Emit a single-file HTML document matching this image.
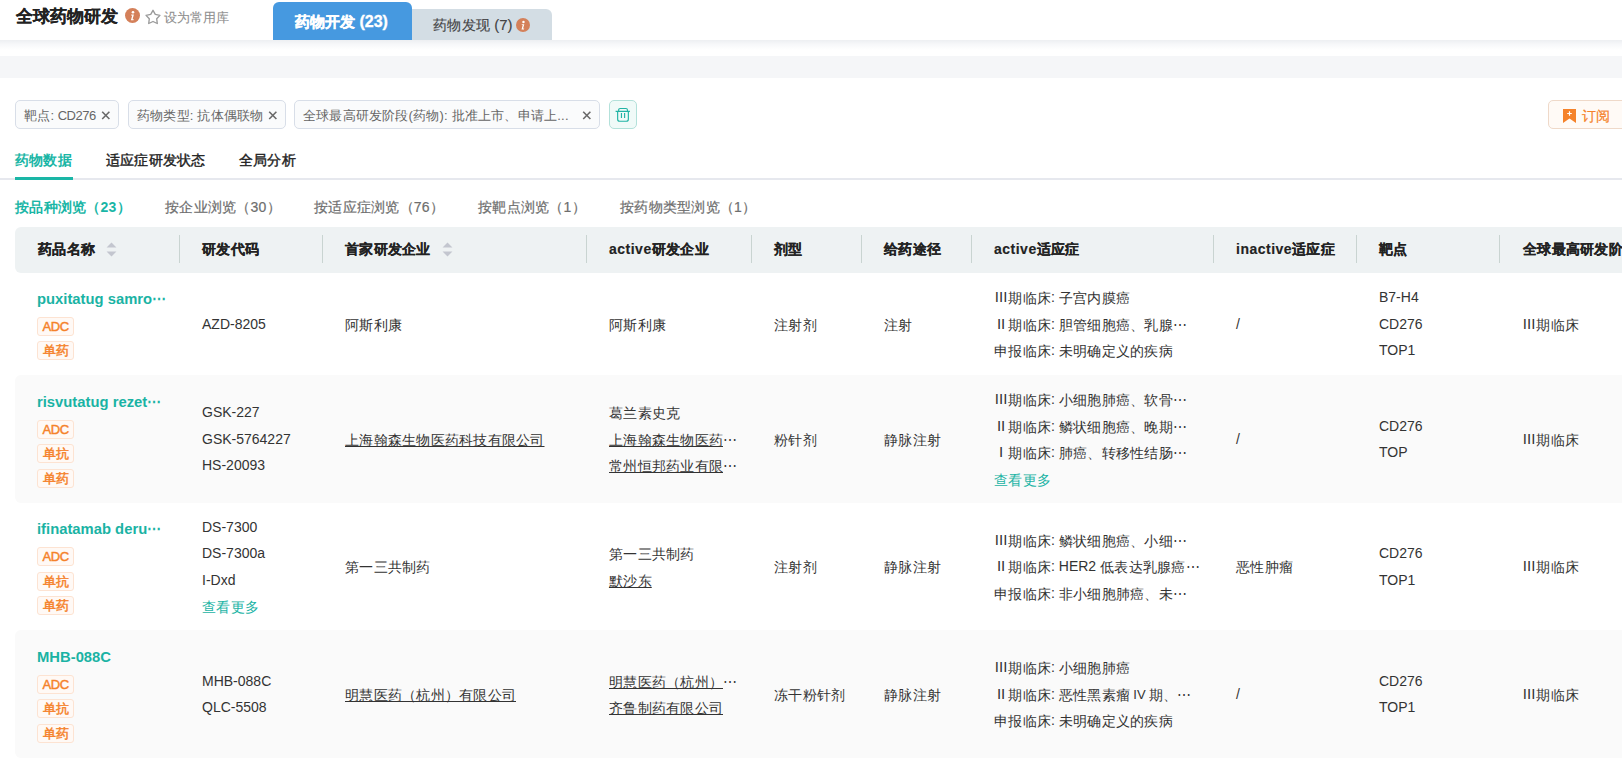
<!DOCTYPE html>
<html><head><meta charset="utf-8">
<style>
*{box-sizing:border-box;margin:0;padding:0}
html,body{width:1622px;height:759px;overflow:hidden;background:#fff}
body{position:relative;font-family:"Liberation Sans",sans-serif;font-size:14px;color:#333}
.abs{position:absolute;white-space:nowrap}
.hdr{position:absolute;left:0;top:0;width:1622px;height:40px;background:#fff}
.shadow{position:absolute;left:0;top:40px;width:1622px;height:10px;background:linear-gradient(#edeff2,#f7f8fa 45%,rgba(255,255,255,0))}
.band{position:absolute;left:0;top:56px;width:1622px;height:22px;background:#f5f6f8}
.title{left:15.5px;top:5px;font-size:17px;font-weight:bold;color:#222;line-height:24px;-webkit-text-stroke:0.15px #222}
.info{position:absolute;width:15px;height:15px;border-radius:50%;background:#d4805a}
.info svg{position:absolute;left:0;top:0}
.fav{left:164px;top:8px;font-size:13px;color:#8f8f8f;line-height:20px;-webkit-text-stroke:0.1px #8f8f8f}
.tab1{left:273px;top:2px;width:139px;height:38px;background:#4699e0;border-radius:6px 6px 0 0;color:#fff;font-weight:bold;font-size:15px;line-height:40px;text-align:left;padding-left:21.5px;letter-spacing:0.15px;-webkit-text-stroke:0.35px #fff}
.tab2{left:412px;top:9px;width:140px;height:31px;background:#d3dde4;border-radius:0 6px 0 0;color:#444;font-size:14px;line-height:31px}
.chip{position:absolute;top:100px;height:29px;border:1px solid #d8dee8;border-radius:5px;background:#fafbfc;color:#666;font-size:13px;line-height:29.5px;padding-left:8px;white-space:nowrap;letter-spacing:0.2px}
.chip .x{position:absolute;top:0;width:9px;height:27px}
.trash{position:absolute;left:609px;top:100px;width:28px;height:29px;border:1px solid #b3e1da;border-radius:5px;background:#f0faf8}
.sub{position:absolute;left:1548px;top:100px;width:90px;height:29px;border:1px solid #efd9c9;border-radius:5px;background:#fffaf6;color:#f5822a;font-size:14px;line-height:31px}
.mtab{top:150px;font-size:14px;line-height:20px;color:#222;letter-spacing:0.2px;-webkit-text-stroke:0.4px #222}
.mline{position:absolute;left:0;top:178px;width:1622px;height:2px;background:#e6e8ee}
.mbar{position:absolute;left:15px;top:177px;width:58px;height:3px;background:#1ab6a6}
.stab{top:196.5px;font-size:14px;line-height:20px;color:#6e6e6e;letter-spacing:0.25px;-webkit-text-stroke:0.2px #6e6e6e}
.thead{position:absolute;left:15px;top:227px;width:1620px;height:46px;background:#eef2f3;border-radius:6px 0 0 6px}
.th{position:absolute;top:0;height:44px;line-height:44px;font-weight:bold;color:#222;font-size:14px;letter-spacing:0.3px;-webkit-text-stroke:0.15px #222;white-space:nowrap}
.dv{position:absolute;top:8px;width:1px;height:28px;background:#c9d4d1}
.row{position:absolute;left:15px;width:1620px}
.row.g{background:#fafafa;border-radius:6px 0 0 6px}
.cell{position:absolute;top:0;bottom:0;display:flex;flex-direction:column;justify-content:center;white-space:nowrap;font-size:14px;letter-spacing:0.25px}
.l{letter-spacing:0}
.c{position:relative;top:1px}
.th .c,.tag .c,.nm .c{top:0}
.th .l{letter-spacing:0.5px}
.ln{height:26.5px;line-height:26.5px}
.nm{color:#1ab3a4;font-weight:bold;line-height:22px;height:22px;font-size:14.8px}
.tag{display:inline-block;width:37px;text-align:center;height:19px;line-height:17.5px;border:1px solid #fde3d2;background:#fff9f5;letter-spacing:0;color:#f5822a;font-size:13px;padding:0;border-radius:3px;margin-top:5.5px;align-self:flex-start;-webkit-text-stroke:0.45px #f5822a}
.tag.f{margin-top:7px}
.adc{font-weight:normal}
.adc .l{letter-spacing:-0.4px}
.lk{color:#1ab3a4}
.u{text-decoration:underline;text-underline-offset:1px}
.dots{font-size:14px}
.rn{display:inline-block;width:14.25px;text-align:center;font-size:15px;letter-spacing:0}
.rn.r4{font-size:13px;letter-spacing:-0.2px}
.sp{display:inline-block;width:2.3px}
.sort{position:absolute;right:-22px;top:15px}
</style></head><body>
<div class="hdr"></div>
<div class="shadow"></div>
<div class="band"></div>

<div class="abs title">全球药物研发</div>
<div class="info" style="left:125px;top:8px"><svg width="15" height="15" viewBox="0 0 15 15"><circle cx="8" cy="4.2" r="1.3" fill="#fff"/><path d="M6.3 6.6h2.6l-1.3 4.6h1.2l-.3 1h-2.6l1.3-4.6h-1.2z" fill="#fff"/></svg></div>
<svg class="abs" style="left:144.5px;top:8.5px" width="16" height="16" viewBox="0 0 16 16"><path d="M8.00 1.30L10.29 5.44L14.94 6.34L11.71 9.81L12.29 14.51L8.00 12.50L3.71 14.51L4.29 9.81L1.06 6.34L5.71 5.44z" fill="none" stroke="#9a9a9a" stroke-width="1.35" stroke-linejoin="round"/></svg>
<div class="abs fav">设为常用库</div>

<div class="abs tab1">药物开发 <span style="font-size:16px;letter-spacing:0">(23)</span></div>
<div class="abs tab2"><span style="position:absolute;left:21px;top:0;letter-spacing:0.25px;-webkit-text-stroke:0.15px #444">药物发现 <span style="font-size:15px;letter-spacing:0">(7)</span></span><div class="info" style="left:104px;top:9px;width:14px;height:14px"><svg width="14" height="14" viewBox="0 0 15 15"><circle cx="8" cy="4.2" r="1.3" fill="#fff"/><path d="M6.3 6.6h2.6l-1.3 4.6h1.2l-.3 1h-2.6l1.3-4.6h-1.2z" fill="#fff"/></svg></div></div>

<!-- chips -->
<div class="chip" style="left:15px;width:104px">靶点<span style="letter-spacing:0">: </span><span style="letter-spacing:-0.5px">CD276</span><svg class="x" style="right:8px" viewBox="0 0 9 27"><path d="M1.2 10.8l7.2 7.2M8.4 10.8L1.2 18" stroke="#6a6a6a" stroke-width="1.6"/></svg></div>
<div class="chip" style="left:128px;width:158px">药物类型: 抗体偶联物<svg class="x" style="right:8px" viewBox="0 0 9 27"><path d="M1.2 10.8l7.2 7.2M8.4 10.8L1.2 18" stroke="#6a6a6a" stroke-width="1.6"/></svg></div>
<div class="chip" style="left:294px;width:306px">全球最高研发阶段(药物): 批准上市、申请上...<svg class="x" style="right:8px" viewBox="0 0 9 27"><path d="M1.2 10.8l7.2 7.2M8.4 10.8L1.2 18" stroke="#6a6a6a" stroke-width="1.6"/></svg></div>
<div class="trash"><svg style="position:absolute;left:5px;top:6px" width="16" height="16" viewBox="0 0 16 16"><path d="M0.6 4.4H14.9M3.65 4.4V3Q3.65 1.5 5.15 1.5H10.95Q12.45 1.5 12.45 3V4.4M2.65 4.4V12.25Q2.65 14.25 4.65 14.25H11.35Q13.35 14.25 13.35 12.25V4.4M6.45 5.9V11.1M9.6 5.9V11.1" fill="none" stroke="#22b4a5" stroke-width="1.15"/></svg></div>
<div class="sub"><svg style="position:absolute;left:14px;top:8px" width="13" height="14" viewBox="0 0 13 14"><path d="M0 0h13v14L6.5 9.6 0 14z" fill="#f5822a"/><path d="M6.5 2.2v4.6M4.2 4.5h4.6" stroke="#fff" stroke-width="1.2"/></svg><span style="position:absolute;left:32.5px;top:-0.5px;-webkit-text-stroke:0.2px #f5822a">订阅</span></div>

<!-- main tabs -->
<div class="mline"></div>
<div class="mbar"></div>
<div class="abs mtab" style="left:15px;color:#1ab6a6;font-weight:bold;-webkit-text-stroke:0">药物数据</div>
<div class="abs mtab" style="left:106px">适应症研发状态</div>
<div class="abs mtab" style="left:239px">全局分析</div>

<!-- sub tabs -->
<div class="abs stab" style="left:15px;color:#1ab6a6;font-weight:bold;-webkit-text-stroke:0">按品种浏览（23）</div>
<div class="abs stab" style="left:165px">按企业浏览（30）</div>
<div class="abs stab" style="left:314px">按适应症浏览（76）</div>
<div class="abs stab" style="left:478px">按靶点浏览（1）</div>
<div class="abs stab" style="left:620px">按药物类型浏览（1）</div>

<!-- TABLE -->
<div class="thead">
<div class="th" style="left:23px"><span class="c">药品名称</span><svg class="sort" width="11" height="15" viewBox="0 0 10 15" preserveAspectRatio="none"><path d="M5 0.5L9.5 5.5H0.5z" fill="#c3c6cf"/><path d="M5 14.5L9.5 9.5H0.5z" fill="#c3c6cf"/></svg></div>
<div class="th" style="left:187px"><span class="c">研发代码</span></div>
<div class="dv" style="left:164px"></div>
<div class="th" style="left:330px"><span class="c">首家研发企业</span><svg class="sort" width="11" height="15" viewBox="0 0 10 15" preserveAspectRatio="none"><path d="M5 0.5L9.5 5.5H0.5z" fill="#c3c6cf"/><path d="M5 14.5L9.5 9.5H0.5z" fill="#c3c6cf"/></svg></div>
<div class="dv" style="left:307px"></div>
<div class="th" style="left:594px"><span class="l">active</span><span class="c">研发企业</span></div>
<div class="dv" style="left:571px"></div>
<div class="th" style="left:759px"><span class="c">剂型</span></div>
<div class="dv" style="left:736px"></div>
<div class="th" style="left:869px"><span class="c">给药途径</span></div>
<div class="dv" style="left:846px"></div>
<div class="th" style="left:979px"><span class="l">active</span><span class="c">适应症</span></div>
<div class="dv" style="left:956px"></div>
<div class="th" style="left:1221px"><span class="l">inactive</span><span class="c">适应症</span></div>
<div class="dv" style="left:1198px"></div>
<div class="th" style="left:1364px"><span class="c">靶点</span></div>
<div class="dv" style="left:1341px"></div>
<div class="th" style="left:1508px"><span class="c">全球最高研发阶段</span></div>
<div class="dv" style="left:1484px"></div>
</div>
<div class="row" style="top:273px;height:102px">
<div class="cell" style="left:22px"><div class="nm"><span class="l">puxitatug samro</span><span class="dots"><span class="c">⋯</span></span></div><div class="tag f"><b class="adc"><span class="l">ADC</span></b></div><div class="tag"><span class="c">单药</span></div></div>
<div class="cell" style="left:187px"><div class="ln"><span class="l">AZD-8205</span></div></div>
<div class="cell" style="left:330px"><div class="ln"><span class="c">阿斯利康</span></div></div>
<div class="cell" style="left:594px"><div class="ln"><span class="c">阿斯利康</span></div></div>
<div class="cell" style="left:759px"><div class="ln"><span class="c">注射剂</span></div></div>
<div class="cell" style="left:869px"><div class="ln"><span class="c">注射</span></div></div>
<div class="cell" style="left:979px"><div class="ln"><span class="rn"><span class="l">III</span></span><span class="c">期临床</span><span class="l">: </span><span class="c">子宫内膜癌</span></div><div class="ln"><span class="rn"><span class="l">II</span></span><span class="c">期临床</span><span class="l">: </span><span class="c">胆管细胞癌、乳腺</span><span class="dots"><span class="c">⋯</span></span></div><div class="ln"><span class="c">申报临床</span><span class="l">: </span><span class="c">未明确定义的疾病</span></div></div>
<div class="cell" style="left:1221px"><div class="ln"><span class="l">/</span></div></div>
<div class="cell" style="left:1364px"><div class="ln"><span class="l">B7-H4</span></div><div class="ln"><span class="l">CD276</span></div><div class="ln"><span class="l">TOP1</span></div></div>
<div class="cell" style="left:1507px"><div class="ln"><span class="rn"><span class="l">III</span></span><span class="c">期临床</span></div></div>
</div>
<div class="row g" style="top:375px;height:128px">
<div class="cell" style="left:22px"><div class="nm"><span class="l">risvutatug rezet</span><span class="dots"><span class="c">⋯</span></span></div><div class="tag f"><b class="adc"><span class="l">ADC</span></b></div><div class="tag"><span class="c">单抗</span></div><div class="tag"><span class="c">单药</span></div></div>
<div class="cell" style="left:187px"><div class="ln"><span class="l">GSK-227</span></div><div class="ln"><span class="l">GSK-5764227</span></div><div class="ln"><span class="l">HS-20093</span></div></div>
<div class="cell" style="left:330px"><div class="ln"><span class="u"><span class="c">上海翰森生物医药科技有限公司</span></span></div></div>
<div class="cell" style="left:594px"><div class="ln"><span class="c">葛兰素史克</span></div><div class="ln"><span class="u"><span class="c">上海翰森生物医药</span></span><span class="dots"><span class="c">⋯</span></span></div><div class="ln"><span class="u"><span class="c">常州恒邦药业有限</span></span><span class="dots"><span class="c">⋯</span></span></div></div>
<div class="cell" style="left:759px"><div class="ln"><span class="c">粉针剂</span></div></div>
<div class="cell" style="left:869px"><div class="ln"><span class="c">静脉注射</span></div></div>
<div class="cell" style="left:979px"><div class="ln"><span class="rn"><span class="l">III</span></span><span class="c">期临床</span><span class="l">: </span><span class="c">小细胞肺癌、软骨</span><span class="dots"><span class="c">⋯</span></span></div><div class="ln"><span class="rn"><span class="l">II</span></span><span class="c">期临床</span><span class="l">: </span><span class="c">鳞状细胞癌、晚期</span><span class="dots"><span class="c">⋯</span></span></div><div class="ln"><span class="rn"><span class="l">I</span></span><span class="c">期临床</span><span class="l">: </span><span class="c">肺癌、转移性结肠</span><span class="dots"><span class="c">⋯</span></span></div><div class="ln"><span class="lk"><span class="c">查看更多</span></span></div></div>
<div class="cell" style="left:1221px"><div class="ln"><span class="l">/</span></div></div>
<div class="cell" style="left:1364px"><div class="ln"><span class="l">CD276</span></div><div class="ln"><span class="l">TOP</span></div></div>
<div class="cell" style="left:1507px"><div class="ln"><span class="rn"><span class="l">III</span></span><span class="c">期临床</span></div></div>
</div>
<div class="row" style="top:503px;height:127px">
<div class="cell" style="left:22px"><div class="nm"><span class="l">ifinatamab deru</span><span class="dots"><span class="c">⋯</span></span></div><div class="tag f"><b class="adc"><span class="l">ADC</span></b></div><div class="tag"><span class="c">单抗</span></div><div class="tag"><span class="c">单药</span></div></div>
<div class="cell" style="left:187px"><div class="ln"><span class="l">DS-7300</span></div><div class="ln"><span class="l">DS-7300a</span></div><div class="ln"><span class="l">I-Dxd</span></div><div class="ln"><span class="lk"><span class="c">查看更多</span></span></div></div>
<div class="cell" style="left:330px"><div class="ln"><span class="c">第一三共制药</span></div></div>
<div class="cell" style="left:594px"><div class="ln"><span class="c">第一三共制药</span></div><div class="ln"><span class="u"><span class="c">默沙东</span></span></div></div>
<div class="cell" style="left:759px"><div class="ln"><span class="c">注射剂</span></div></div>
<div class="cell" style="left:869px"><div class="ln"><span class="c">静脉注射</span></div></div>
<div class="cell" style="left:979px"><div class="ln"><span class="rn"><span class="l">III</span></span><span class="c">期临床</span><span class="l">: </span><span class="c">鳞状细胞癌、小细</span><span class="dots"><span class="c">⋯</span></span></div><div class="ln"><span class="rn"><span class="l">II</span></span><span class="c">期临床</span><span class="l">: HER2 </span><span class="c">低表达乳腺癌</span><span class="dots"><span class="c">⋯</span></span></div><div class="ln"><span class="c">申报临床</span><span class="l">: </span><span class="c">非小细胞肺癌、未</span><span class="dots"><span class="c">⋯</span></span></div></div>
<div class="cell" style="left:1221px"><div class="ln"><span class="c">恶性肿瘤</span></div></div>
<div class="cell" style="left:1364px"><div class="ln"><span class="l">CD276</span></div><div class="ln"><span class="l">TOP1</span></div></div>
<div class="cell" style="left:1507px"><div class="ln"><span class="rn"><span class="l">III</span></span><span class="c">期临床</span></div></div>
</div>
<div class="row g" style="top:630px;height:128px">
<div class="cell" style="left:22px"><div class="nm"><span class="l">MHB-088C</span></div><div class="tag f"><b class="adc"><span class="l">ADC</span></b></div><div class="tag"><span class="c">单抗</span></div><div class="tag"><span class="c">单药</span></div></div>
<div class="cell" style="left:187px"><div class="ln"><span class="l">MHB-088C</span></div><div class="ln"><span class="l">QLC-5508</span></div></div>
<div class="cell" style="left:330px"><div class="ln"><span class="u"><span class="c">明慧医药（杭州）有限公司</span></span></div></div>
<div class="cell" style="left:594px"><div class="ln"><span class="u"><span class="c">明慧医药（杭州）</span></span><span class="dots"><span class="c">⋯</span></span></div><div class="ln"><span class="u"><span class="c">齐鲁制药有限公司</span></span></div></div>
<div class="cell" style="left:759px"><div class="ln"><span class="c">冻干粉针剂</span></div></div>
<div class="cell" style="left:869px"><div class="ln"><span class="c">静脉注射</span></div></div>
<div class="cell" style="left:979px"><div class="ln"><span class="rn"><span class="l">III</span></span><span class="c">期临床</span><span class="l">: </span><span class="c">小细胞肺癌</span></div><div class="ln"><span class="rn"><span class="l">II</span></span><span class="c">期临床</span><span class="l">: </span><span class="c">恶性黑素瘤</span><span class="sp"></span><span class="rn r4"><span class="l">IV</span></span><span class="sp"></span><span class="c">期、</span><span class="dots"><span class="c">⋯</span></span></div><div class="ln"><span class="c">申报临床</span><span class="l">: </span><span class="c">未明确定义的疾病</span></div></div>
<div class="cell" style="left:1221px"><div class="ln"><span class="l">/</span></div></div>
<div class="cell" style="left:1364px"><div class="ln"><span class="l">CD276</span></div><div class="ln"><span class="l">TOP1</span></div></div>
<div class="cell" style="left:1507px"><div class="ln"><span class="rn"><span class="l">III</span></span><span class="c">期临床</span></div></div>
</div>
</body></html>
